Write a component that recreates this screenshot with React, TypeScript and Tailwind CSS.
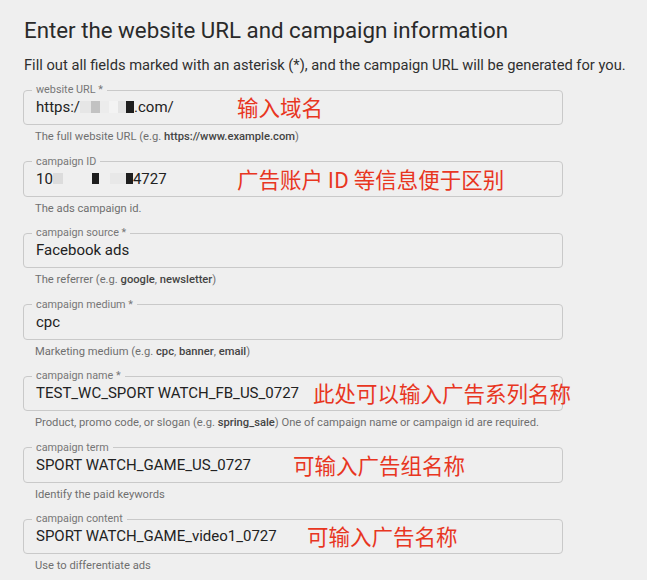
import type { ReactNode } from "react";

type Field = {
  label: string;
  value: ReactNode;
  helper: ReactNode;
  note?: { text: string; left: string };
};

const Blur = ({ w, c }: { w: string; c: string }) => (
  <span className={`inline-block h-[11px] align-middle ${w} ${c}`} />
);

const fields: Field[] = [
  {
    label: "website URL *",
    value: (
      <span className="flex items-center">
        <span>https:/</span>
        <span className="flex items-center">
          <span className="inline-block h-[12px] w-[11px] bg-[#e6e6e6]" />
          <span className="inline-block h-[12px] w-[9px] bg-[#c2c2c2]" />
          <span className="inline-block h-[12px] w-[9px] bg-[#ececec]" />
          <span className="inline-block h-[12px] w-[9px] bg-[#f3f3f3]" />
          <span className="inline-block h-[12px] w-[8px] bg-[#e4e4e4]" />
          <span className="inline-block h-[12px] w-[8px] bg-[#1e1e1e]" />
        </span>
        <span>.com/</span>
      </span>
    ),
    helper: (
      <>
        The full website URL (e.g. <b className="font-medium text-[#444]">https://www.example.com</b>)
      </>
    ),
    note: { text: "输入域名", left: "left-[214px]" },
  },
  {
    label: "campaign ID",
    value: (
      <span className="flex items-center">
        <span>10</span>
        <Blur w="w-[10px]" c="bg-[#dcdcdc]" />
        <span className="inline-block w-[29px]" />
        <Blur w="w-[7px]" c="bg-[#1e1e1e]" />
        <span className="inline-block w-[11px]" />
        <Blur w="w-[16px]" c="bg-[#e8e8e8]" />
        <Blur w="w-[7px]" c="bg-[#1e1e1e]" />
        <span>4727</span>
      </span>
    ),
    helper: "The ads campaign id.",
    note: { text: "广告账户 ID 等信息便于区别", left: "left-[214px]" },
  },
  {
    label: "campaign source *",
    value: "Facebook ads",
    helper: (
      <>
        The referrer (e.g. <b className="font-medium text-[#444]">google</b>,{" "}
        <b className="font-medium text-[#444]">newsletter</b>)
      </>
    ),
  },
  {
    label: "campaign medium *",
    value: "cpc",
    helper: (
      <>
        Marketing medium (e.g. <b className="font-medium text-[#444]">cpc</b>,{" "}
        <b className="font-medium text-[#444]">banner</b>,{" "}
        <b className="font-medium text-[#444]">email</b>)
      </>
    ),
  },
  {
    label: "campaign name *",
    value: "TEST_WC_SPORT WATCH_FB_US_0727",
    helper: (
      <>
        Product, promo code, or slogan (e.g. <b className="font-medium text-[#444]">spring_sale</b>) One of
        campaign name or campaign id are required.
      </>
    ),
    note: { text: "此处可以输入广告系列名称", left: "left-[290px]" },
  },
  {
    label: "campaign term",
    value: "SPORT WATCH_GAME_US_0727",
    helper: "Identify the paid keywords",
    note: { text: "可输入广告组名称", left: "left-[270px]" },
  },
  {
    label: "campaign content",
    value: "SPORT WATCH_GAME_video1_0727",
    helper: "Use to differentiate ads",
    note: { text: "可输入广告名称", left: "left-[284px]" },
  },
];

function FieldBox({ f }: { f: Field }) {
  return (
    <div className="flex flex-col">
      <div className="relative">
        <fieldset className="w-[540px] rounded-[4px] border border-[#c9c9c9] px-[8px] pb-[7px]">
          <legend className="px-[4px] text-[10.8px] leading-[12px] text-[#777]">{f.label}</legend>
          <div className="pl-[4px] pt-[1px] text-[15px] leading-[20px] text-[#222]">{f.value}</div>
        </fieldset>
        {f.note && (
          <span
            className={`absolute top-[10px] ${f.note.left} whitespace-nowrap text-[21.5px] leading-[26px] text-[#e8361f] [font-family:'Noto_Sans_CJK_SC','Roboto',sans-serif]`}
          >
            {f.note.text}
          </span>
        )}
      </div>
      <p className="mt-[6px] pl-[12px] text-[11.2px] leading-[12px] text-[#6f6f6f]">{f.helper}</p>
    </div>
  );
}

export default function App() {
  return (
    <main className="h-[580px] w-full overflow-hidden bg-[#efefef] pl-[24px] pt-[17px] [font-family:Roboto,'Noto_Sans',sans-serif]">
      <h1 className="text-[22.3px] leading-[26px] text-[#2a2a2a]">
        Enter the website URL and campaign information
      </h1>
      <p className="mt-[12px] text-[14.7px] leading-[20px] text-[#2f2f2f]">
        Fill out all fields marked with an asterisk (*), and the campaign URL will be generated for you.
      </p>
      <div className="-ml-[1px] mt-[9px] flex flex-col gap-[12.5px]">
        {fields.map((f) => (
          <FieldBox key={f.label} f={f} />
        ))}
      </div>
    </main>
  );
}
